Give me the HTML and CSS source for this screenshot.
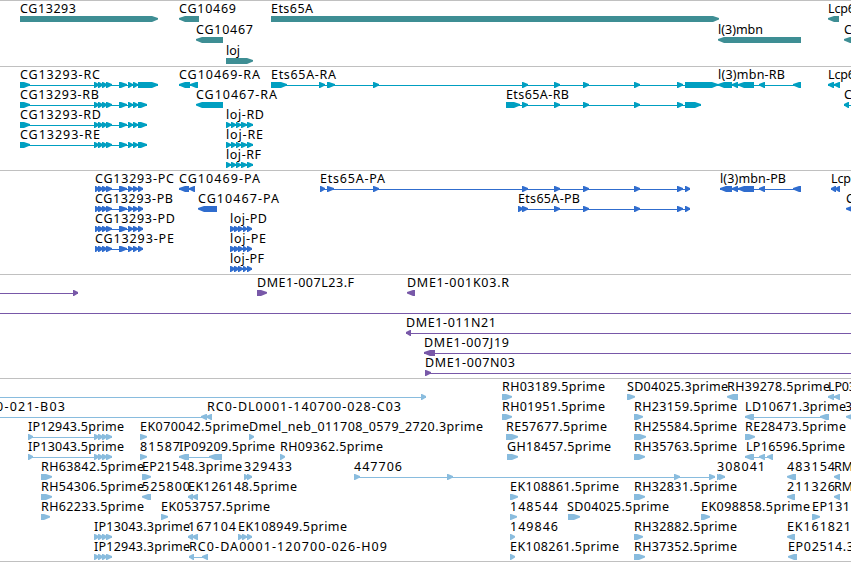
FILE: index.html
```html
<!DOCTYPE html>
<html lang="en">
<head>
    <meta charset="UTF-8">
    <meta name="viewport" content="width=device-width, initial-scale=1.0">
    <title>Genome Browser</title>
    <link rel="stylesheet" href="styles.css">
</head>
<body>
    <div class="browser">
        <svg class="track gene" id="genes"></svg>
        <svg class="track transcript" id="transcripts"></svg>
        <svg class="track protein" id="proteins"></svg>
        <svg class="track bac" id="bacs"></svg>
        <svg class="track est" id="ests"></svg>
    </div>

    <script>
        const SVG = 'http://www.w3.org/2000/svg';

        function add(parent, name, attrs) {
            const el = document.createElementNS(SVG, name);
            for (const key in attrs) {
                el.setAttribute(key, attrs[key]);
            }
            parent.appendChild(el);
            return el;
        }

        // feature: [row, label, label start, label end, direction, exons, line start, line end]
        function drawTrack(id, rowHeight, features) {
            const svg = document.getElementById(id);
            features.forEach(([row, label, x, end, dir, exons, from, to]) => {
                const top = row * rowHeight + 15;
                if (exons.length > 1 || from !== undefined) {
                    const first = from ?? exons[0][0];
                    const last = to ?? exons[exons.length - 1][1];
                    add(svg, 'rect', { x: first, y: top + 3, width: last - first, height: 1 });
                }
                exons.forEach(([a, b]) => {
                    const head = Math.min(6, b - a - 1);
                    const points = dir === '+'
                        ? [[a, top], [b - head, top], [b, top + 2], [b, top + 3.5], [b - head, top + 6], [a, top + 6]]
                        : [[b, top], [a + head, top], [a, top + 2], [a, top + 3.5], [a + head, top + 6], [b, top + 6]];
                    add(svg, 'polygon', { points: points.join(' ') });
                });
                if (label) {
                    const text = add(svg, 'text', { x: x, y: top - 3, textLength: end - x });
                    text.textContent = label;
                }
            });
        }

        const four = [[94, 99], [98, 103], [102, 107], [106, 112]];
        const mid = [[119, 127], [128, 133], [133, 138]];
        const lojR = [[226, 231], [231, 236], [236, 241], [241, 247], [247, 253]];
        const lojP = [[230, 235], [234, 239], [238, 243], [243, 247], [247, 252]];
        const ets = [[522, 528], [554, 560], [583, 589], [634, 640], [677, 683]];

        drawTrack('genes', 21, [
            [0, 'CG13293', 20, 76, '+', [[20, 158]]],
            [0, 'CG10469', 179, 236, '-', [[179, 199]]],
            [0, 'Ets65A', 271, 313, '+', [[271, 719]]],
            [0, 'Lcp6', 828, 855, '-', [[828, 839]]],
            [1, 'CG10467', 196, 253, '-', [[196, 223]]],
            [1, 'l(3)mbn', 718, 763, '-', [[718, 801]]],
            [1, 'C', 844, 853, '-', [[844, 860]]],
            [2, 'loj', 226, 240, '+', [[226, 253]]]
        ]);

        drawTrack('transcripts', 20, [
            [0, 'CG13293-RC', 20, 100, '+', [[20, 30], ...four, ...mid, [138, 158]]],
            [0, 'CG10469-RA', 179, 260, '-', [[179, 190], [190, 198]]],
            [0, 'Ets65A-RA', 271, 336, '+', [[271, 287], [319, 325], [327, 335], [373, 379], ...ets, [685, 718]]],
            [0, 'l(3)mbn-RB', 718, 785, '-', [[718, 732], [732, 738], [738, 754], [759, 765], [793, 801]]],
            [0, 'Lcp6', 828, 855, '-', [[828, 834], [834, 840]]],
            [1, 'CG13293-RB', 20, 99, '+', [[20, 30], ...four, ...mid, [138, 147]]],
            [1, 'CG10467-RA', 196, 277, '-', [[196, 223]]],
            [1, 'Ets65A-RB', 506, 569, '+', [[506, 520], ...ets, [685, 701]]],
            [1, 'C', 844, 853, '-', [[844, 849]], 844, 860],
            [2, 'CG13293-RD', 20, 101, '+', [[20, 30], ...four, ...mid, [138, 147]]],
            [2, 'loj-RD', 226, 264, '+', lojR],
            [3, 'CG13293-RE', 20, 100, '+', [[20, 30], ...four, ...mid, [138, 147]]],
            [3, 'loj-RE', 226, 263, '+', lojR],
            [4, 'loj-RF', 226, 261, '+', lojR]
        ]);

        const cds = [[95, 99], ...four.slice(1), ...mid, [138, 143]];
        drawTrack('proteins', 20, [
            [0, 'CG13293-PC', 95, 174, '+', cds],
            [0, 'CG10469-PA', 179, 260, '-', [[179, 189], [189, 195]]],
            [0, 'Ets65A-PA', 320, 385, '+', [[320, 325], [327, 334], [373, 379], ...ets, [685, 690]]],
            [0, 'l(3)mbn-PB', 720, 786, '-', [[720, 732], [732, 738], [738, 754], [759, 765], [793, 801]]],
            [0, 'Lcp6', 831, 858, '-', [[831, 836], [835, 840]]],
            [1, 'CG13293-PB', 95, 173, '+', cds],
            [1, 'CG10467-PA', 198, 279, '-', [[198, 217]]],
            [1, 'Ets65A-PB', 518, 580, '+', [[518, 523], ...ets, [685, 690]]],
            [1, 'C', 846, 855, '-', [[846, 860]]],
            [2, 'CG13293-PD', 95, 175, '+', cds],
            [2, 'loj-PD', 230, 267, '+', lojP],
            [3, 'CG13293-PE', 95, 174, '+', cds],
            [3, 'loj-PE', 230, 266, '+', lojP],
            [4, 'loj-PF', 230, 264, '+', lojP]
        ]);

        drawTrack('bacs', 20, [
            [0, '', 0, 0, '+', [[73, 78]], -10, 78],
            [0, 'DME1-007L23.F', 257, 354, '+', [[257, 267]]],
            [0, 'DME1-001K03.R', 407, 509, '-', [[407, 415]]],
            [1, '', 0, 0, '+', [], -10, 860],
            [2, 'DME1-011N21', 406, 496, '-', [[406, 411]], 406, 860],
            [3, 'DME1-007J19', 424, 509, '-', [[424, 435]], 424, 860],
            [4, 'DME1-007N03', 425, 515, '+', [[425, 431]], 425, 860]
        ]);

        drawTrack('ests', 20, [
            [0, '', 0, 0, '+', [[421, 426]], -10, 426],
            [0, 'RH03189.5prime', 502, 605, '+', [[502, 512]]],
            [0, 'SD04025.3prime', 627, 728, '+', [[627, 635]]],
            [0, 'RH39278.5prime', 727, 830, '-', [[727, 738]]],
            [0, 'LP03', 828, 856, '-', [[828, 834], [834, 840]]],
            [1, '0-021-B03', -4, 65, '-', [[201, 207], [206, 212]], -10, 212],
            [1, 'RC0-DL0001-140700-028-C03', 207, 401, '-', []],
            [1, 'RH01951.5prime', 502, 605, '+', [[502, 512]]],
            [1, 'RH23159.5prime', 634, 737, '+', [[634, 643]]],
            [1, 'LD10671.3prime', 745, 846, '-', [[745, 754], [820, 829]]],
            [1, '3', 845, 853, '-', [[846, 856]]],
            [2, 'IP12943.5prime', 28, 124, '+', [[28, 33], ...four]],
            [2, 'EK070042.5prime', 140, 249, '+', [[140, 147]]],
            [2, 'Dmel_neb_011708_0579_2720.3prime', 249, 483, '+', [[249, 254]]],
            [2, 'RE57677.5prime', 506, 607, '+', [[506, 518]]],
            [2, 'RH25584.5prime', 634, 737, '+', [[634, 646]]],
            [2, 'RE28473.5prime', 745, 846, '+', [[745, 755]]],
            [3, 'IP13043.5prime', 28, 124, '+', [[28, 33], ...four]],
            [3, '81587', 140, 180, '+', [[140, 147]]],
            [3, 'IP09209.5prime', 179, 275, '-', [[179, 189], [209, 222]]],
            [3, 'RH09362.5prime', 280, 383, '+', [[280, 285]]],
            [3, 'GH18457.5prime', 507, 611, '+', [[507, 518]]],
            [3, 'RH35763.5prime', 634, 737, '+', [[634, 645]]],
            [3, 'LP16596.5prime', 746, 845, '-', [[745, 754], [759, 765], [767, 773]]],
            [4, 'RH63842.5prime', 41, 144, '+', [[41, 52]]],
            [4, 'EP21548.3prime', 142, 242, '+', [[142, 151]]],
            [4, '329433', 244, 292, '+', [[244, 248], [247, 252]]],
            [4, '447706', 354, 402, '+', [[354, 360], [447, 453], [674, 680], [709, 715]]],
            [4, '308041', 717, 765, '+', [[717, 721], [719, 725]]],
            [4, '483154', 787, 835, '-', [[787, 796]]],
            [4, 'RM', 834, 853, '-', [[834, 840]]],
            [5, 'RH54306.5prime', 41, 144, '+', [[41, 52]]],
            [5, '525800', 142, 190, '-', [[142, 151]]],
            [5, 'EK126148.5prime', 188, 297, '-', [[188, 193], [192, 198]]],
            [5, 'EK108861.5prime', 510, 619, '+', [[510, 518]]],
            [5, 'RH32831.5prime', 634, 737, '+', [[634, 645]]],
            [5, '211326', 787, 835, '-', [[787, 795]]],
            [5, 'RM', 834, 853, '-', [[834, 840]]],
            [6, 'RH62233.5prime', 41, 144, '+', [[41, 50]]],
            [6, 'EK053757.5prime', 161, 270, '+', [[161, 168]]],
            [6, '148544', 510, 558, '+', [[510, 517]]],
            [6, 'SD04025.5prime', 567, 669, '+', [[568, 580]]],
            [6, 'EK098858.5prime', 701, 810, '+', [[701, 710]]],
            [6, 'EP131', 812, 850, '+', [[812, 820]]],
            [7, 'IP13043.3prime', 94, 190, '+', four],
            [7, '167104', 188, 236, '-', [[188, 193], [192, 198]]],
            [7, 'EK108949.5prime', 238, 347, '+', [[238, 243], [242, 247], [247, 252]]],
            [7, '149846', 510, 558, '+', [[510, 515]]],
            [7, 'RH32882.5prime', 634, 737, '+', [[634, 643]]],
            [7, 'EK161821', 787, 851, '-', [[787, 795]]],
            [8, 'IP12943.3prime', 94, 190, '+', four],
            [8, 'RC0-DA0001-120700-026-H09', 189, 387, '-', [[189, 194], [202, 208]]],
            [8, 'EK108261.5prime', 510, 619, '+', [[510, 515]]],
            [8, 'RH37352.5prime', 634, 737, '+', [[634, 645]]],
            [8, 'EP02514.3', 788, 854, '-', [[788, 797]]]
        ]);
    </script>
</body>
</html>
```
FILE: styles.css
```css
* {
    margin: 0;
    padding: 0;
    box-sizing: border-box;
}

body {
    background-color: white;
    overflow: hidden;
}

.browser {
    width: 851px;
    display: flex;
    flex-direction: column;
    border-bottom: 1px solid #c0c0c0;
}

.track {
    display: block;
    width: 100%;
    height: 104px;
    border-top: 1px solid #c0c0c0;
    overflow: hidden;
}

.track text {
    font-family: "Noto Sans", "DejaVu Sans", sans-serif;
    font-size: 12.5px;
    fill: black;
}

/* Track colors */
.gene {
    height: 66px;
    fill: #3e8e94;
}

.transcript {
    fill: #009fc1;
}

.protein {
    fill: #306dce;
}

.bac {
    fill: #7858a8;
}

.est {
    height: 183px;
    fill: #89bcde;
}
```
